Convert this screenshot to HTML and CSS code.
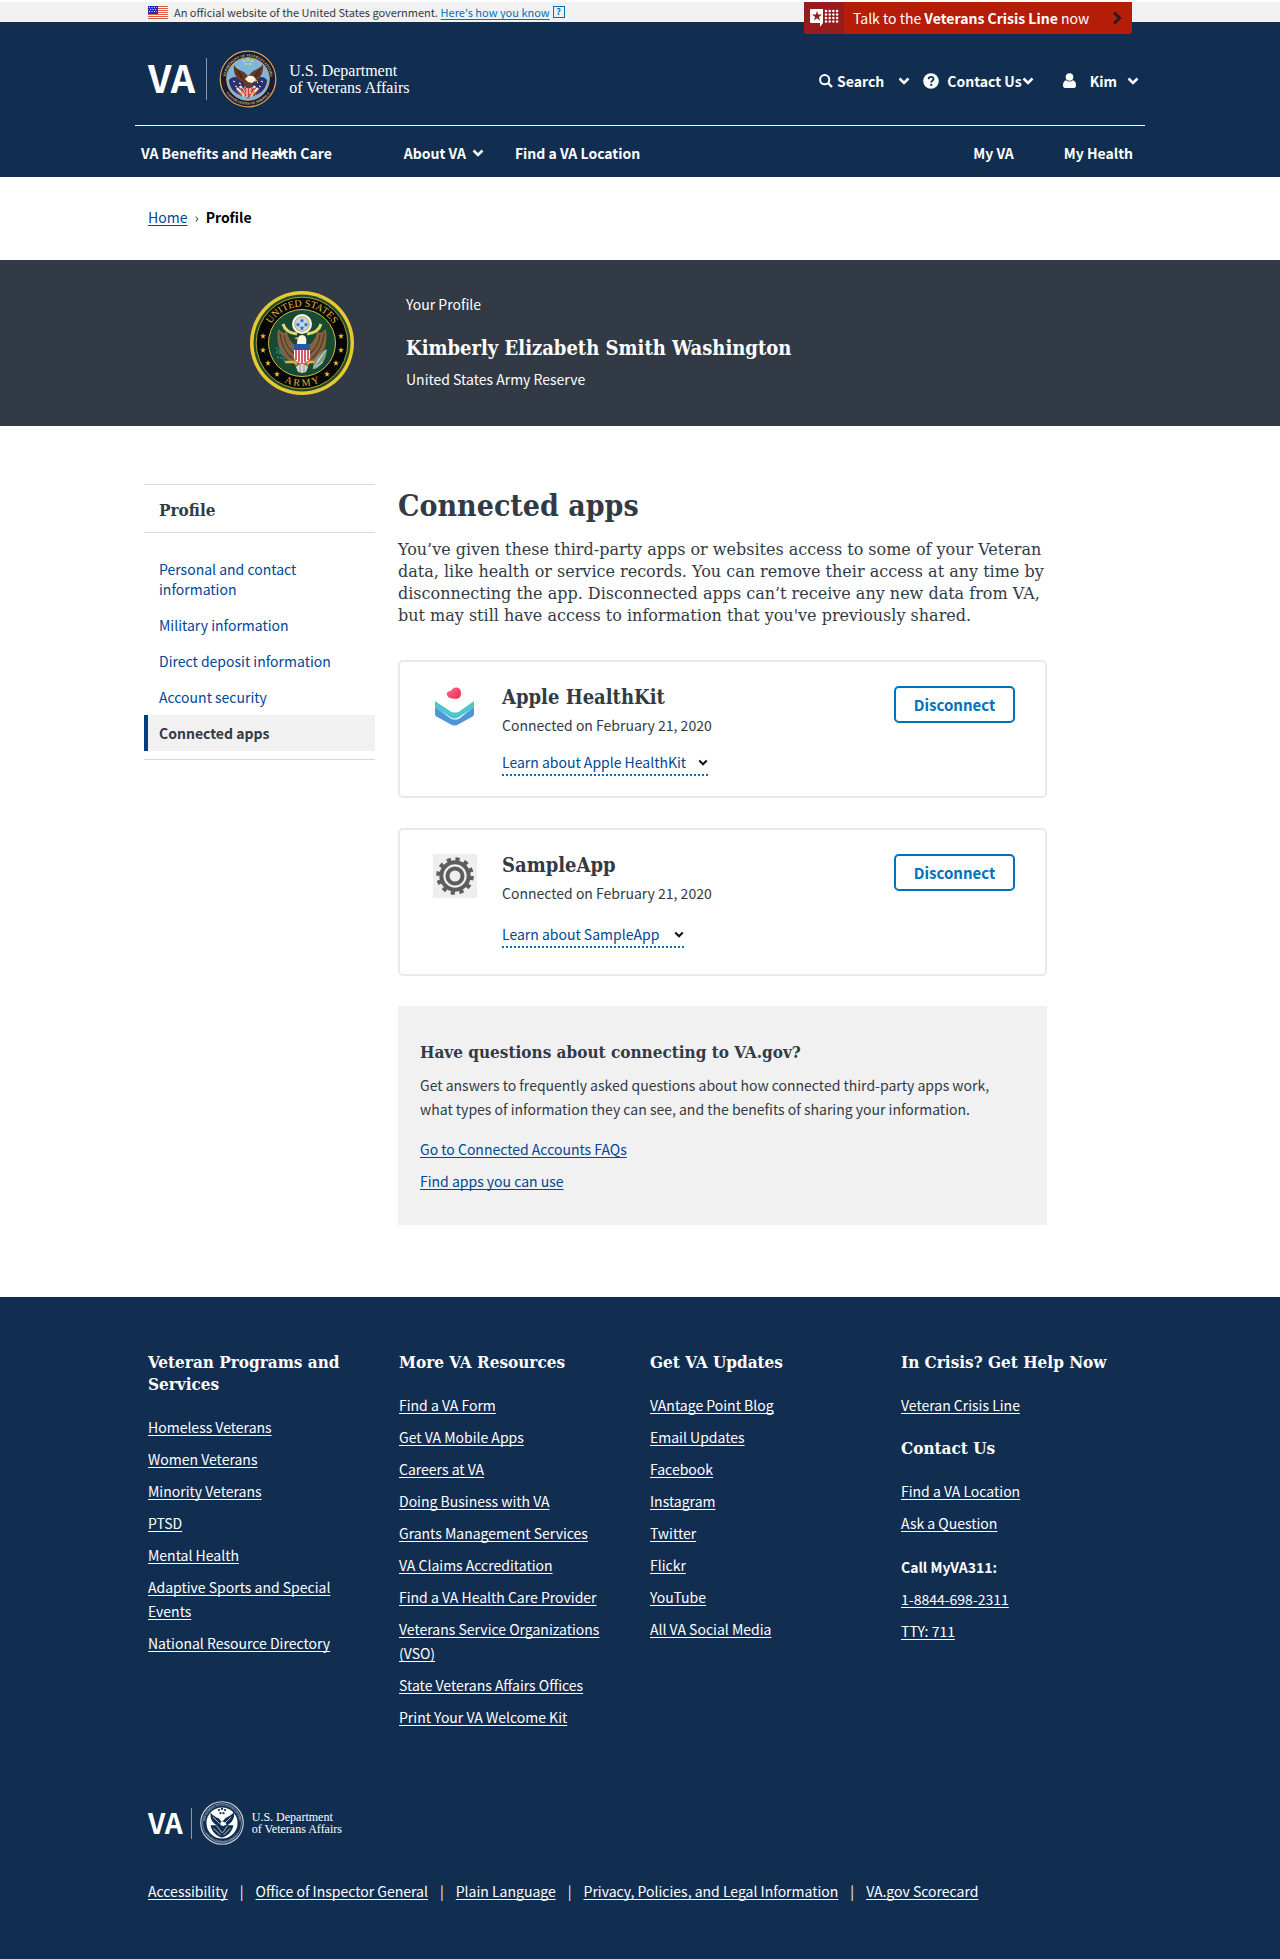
FILE: index.html
```html
<!DOCTYPE html>
<html lang="en">
<head>
<meta charset="utf-8">
<title>Connected apps | Veterans Affairs</title>
<meta name="viewport" content="width=device-width, initial-scale=1">
<link rel="stylesheet" href="styles.css">
</head>
<body>
<svg class="defs" aria-hidden="true">
  <defs>
    <symbol id="chevron" viewBox="0 0 12 8"><path d="M1.5 1.5 6 6l4.500-4.500" fill="none" stroke="currentColor" stroke-width="2.500"/></symbol>
    <symbol id="star" viewBox="0 0 10 10"><path d="M5 0 6.200 3.600H10L6.900 5.900 8.100 9.600 5 7.300 1.900 9.600 3.100 5.900 0 3.600h3.800z" fill="currentColor"/></symbol>
  </defs>
</svg>

<div class="banner">
  <div class="wrap banner-row">
    <svg class="flag" viewBox="0 0 20 13" aria-hidden="true">
      <rect width="20" height="13" fill="#fff"/>
      <path d="M0 .5h20M0 2.500h20M0 4.500h20M0 6.500h20M0 8.500h20M0 10.500h20M0 12.500h20" stroke="#db5b45"/>
      <rect width="10" height="8" fill="#2a2ab4"/>
      <path d="M1 1.500h8M2 3.500h7M1 5.500h8" stroke="#dfe3f8" stroke-dasharray="1 1.500"/>
    </svg>
    <span>An official website of the United States government. <a href="#">Here's how you know</a></span>
    <span class="help">?</span>
    <a class="crisis" href="#">
      <span class="crisis-icon">
        <svg viewBox="0 0 30 18" aria-hidden="true">
          <path d="M2 0h12v14l-3 4v-4H2a1 1 0 0 1-1-1V1a1 1 0 0 1 1-1z" fill="#fff"/>
          <use href="#star" x="3" y="2" width="10" height="10" color="#981b1e"/>
          <path d="M17 2h13M17 5.500h13M17 9h13M17 12.500h13" stroke="#fff" stroke-width="2.600" stroke-linecap="round" stroke-dasharray="0 3.700"/>
        </svg>
      </span>
      <span class="crisis-text">Talk to the <b>Veterans Crisis Line</b> now</span>
      <svg class="crisis-arrow" viewBox="0 0 10 14" aria-hidden="true"><path d="M2 1.500 7.500 7 2 12.500" fill="none" stroke="#2b1a1a" stroke-width="3"/></svg>
    </a>
  </div>
</div>

<header class="header">
  <div class="header-inner">
    <div class="header-top">
      <a class="logo" href="#">
        <span class="logo-va">VA</span>
        <svg class="logo-seal" viewBox="0 0 58 58" aria-hidden="true">
          <defs>
            <path id="seal-top" d="M7.860 36.700a22.500 22.500 0 1 1 42.280 0"/>
            <path id="seal-bottom" d="M3.300 29a25.700 25.700 0 0 0 51.400 0"/>
          </defs>
          <circle cx="29" cy="29" r="28.500" fill="#1b1a33"/>
          <circle cx="29" cy="29" r="27.800" fill="none" stroke="#d0a659" stroke-width="1.300"/>
          <circle cx="29" cy="29" r="21.300" fill="#7db7dc" stroke="#d0a659"/>
          <text class="seal-text"><textPath href="#seal-top" startOffset="50%" text-anchor="middle">DEPARTMENT OF VETERANS AFFAIRS</textPath></text>
          <text class="seal-text"><textPath href="#seal-bottom" startOffset="50%" text-anchor="middle">UNITED STATES OF AMERICA</textPath></text>
          <g fill="#f5e04c"><circle cx="25" cy="11" r="1"/><circle cx="29" cy="10" r="1"/><circle cx="33" cy="11" r="1"/><circle cx="27" cy="14" r="1"/><circle cx="31" cy="14" r="1"/></g>
          <path d="M10 30c4-5 10-4 17 4l-6 11C15 43 10 37 10 30zM48 30c-4-5-10-4-17 4l6 11c6-2 11-8 11-15z" fill="#2a3070"/>
          <path d="M14 31l2 1M16 36l2 1M20 33l2 1M42 31l2 1M40 36l2 1M38 32l1 1M19 40l1 1" stroke="#fff"/>
          <path d="M18 38l7 8M21 36l6 9M39 38l-7 8M36 36l-6 9" stroke="#e8e5e5" stroke-width="2.600"/>
          <path d="M17 40l6 6M22 38l5 8M40 40l-6 6M35 38l-5 8" stroke="#b5303a" stroke-width="1.600"/>
          <path d="M15 15c-1 8 2 14 9 17l3 6h5l3-6c6-3 10-9 9-18-2 4-7 5-11 8l-4 4-4-4c-4-2-8-3-10-7z" fill="#6b3a22"/>
          <path d="M16 18l7 9M19 20l5 8M43 17l-8 10M40 20l-6 8M17 23l7 6M42 23l-8 6" stroke="#3c1f14" stroke-width=".8"/>
          <path d="M29 26c4-1 7 0 8 4l-4 3-4-1-3-3z" fill="#f7f3e6"/>
          <path d="M36 29l3 2-3 1z" fill="#e3b22c"/>
          <path d="M25 38h8l-2 8-2 3-2-3z" fill="#d83a42"/><path d="M28 38v9M31 38v6" stroke="#fff"/>
          <path d="M22 42l4 2M36 42l-4 2" stroke="#dca23b" stroke-width="2"/>
        </svg>
        <span class="logo-name">U.S. Department<br>of Veterans Affairs</span>
      </a>
      <div class="actions">
        <button class="action action-search" type="button">
          <svg class="icon-search" viewBox="0 0 14 14" aria-hidden="true"><circle cx="5.700" cy="5.700" r="4.600" fill="none" stroke="currentColor" stroke-width="2"/><path d="m9 9 4 4" stroke="currentColor" stroke-width="2.400"/></svg>
          <span>Search</span>
          <svg class="chevron" aria-hidden="true"><use href="#chevron"/></svg>
        </button>
        <button class="action action-contact" type="button">
          <svg class="icon-help" viewBox="0 0 16 16" aria-hidden="true"><circle cx="8" cy="8" r="7.800" fill="currentColor"/><path d="M5.600 6.200C5.700 3 10.600 3.200 10.500 6c0 1.900-2.300 1.800-2.300 3.600" fill="none" stroke="#112e51" stroke-width="1.900"/><rect x="7.200" y="10.800" width="2" height="2" fill="#112e51"/></svg>
          <span>Contact Us</span>
          <svg class="chevron" aria-hidden="true"><use href="#chevron"/></svg>
        </button>
        <button class="action action-user" type="button">
          <svg class="icon-user" viewBox="0 0 13 15" aria-hidden="true"><circle cx="6.500" cy="4" r="3.800" fill="currentColor"/><path d="M3 7.200c2 1.700 5 1.700 7 0 2 .5 3 2.500 3 5.300 0 1.600-.8 2.500-2 2.500H2c-1.200 0-2-.9-2-2.500 0-2.800 1-4.800 3-5.300z" fill="currentColor"/></svg>
          <span>Kim</span>
          <svg class="chevron" aria-hidden="true"><use href="#chevron"/></svg>
        </button>
      </div>
    </div>
    <nav class="nav" aria-label="Main">
      <button class="nav-item nav-benefits" type="button">VA Benefits and Health Care<svg class="chevron" aria-hidden="true"><use href="#chevron"/></svg></button>
      <button class="nav-item nav-about" type="button">About VA<svg class="chevron" aria-hidden="true"><use href="#chevron"/></svg></button>
      <a class="nav-item" href="#">Find a VA Location</a>
      <a class="nav-item nav-my" href="#">My VA</a>
      <a class="nav-item" href="#">My Health</a>
    </nav>
  </div>
</header>

<nav class="wrap breadcrumb" aria-label="Breadcrumb">
  <a href="#">Home</a><span class="crumb-sep">›</span><b>Profile</b>
</nav>

<section class="profile">
  <div class="wrap profile-row">
    <svg class="army" viewBox="0 0 104 104" aria-hidden="true">
      <defs>
        <path id="army-top" d="M15.500 52a36.500 36.500 0 0 1 73 0"/>
        <path id="army-bottom" d="M9 52a43 43 0 0 0 86 0"/>
      </defs>
      <circle cx="52" cy="52" r="52" fill="#e9c930"/>
      <circle cx="52" cy="52" r="48.500" fill="#1d4d2b"/>
      <circle cx="52" cy="52" r="45.800" fill="#060606" stroke="#d8bb39" stroke-width=".8"/>
      <circle cx="52" cy="52" r="33.500" fill="#174a33" stroke="#d8bb39"/>
      <text class="army-text"><textPath href="#army-top" startOffset="50%" text-anchor="middle">UNITED STATES</textPath></text>
      <text class="army-text"><textPath href="#army-bottom" startOffset="50%" text-anchor="middle">A R M Y</textPath></text>
      <g color="#ecc236">
        <use href="#star" x="10" y="42" width="6" height="6"/><use href="#star" x="10" y="56" width="6" height="6"/><use href="#star" x="15" y="69" width="6" height="6"/><use href="#star" x="24" y="80" width="6" height="6"/>
        <use href="#star" x="88" y="42" width="6" height="6"/><use href="#star" x="88" y="56" width="6" height="6"/><use href="#star" x="83" y="69" width="6" height="6"/><use href="#star" x="74" y="80" width="6" height="6"/>
      </g>
      <path d="M33 33c2 7 7 9 14 10M71 33c-2 7-7 9-14 10" fill="none" stroke="#e3d66c" stroke-width="3"/>
      <path d="M28 38c-2 14 1 26 13 33l6-2V56c-6-4-9-10-10-15l-4 1zM76 38c2 14-1 26-13 33l-6-2V56c6-4 9-10 10-15l4 1z" fill="#866140"/>
      <path d="M30 42c1 11 5 20 13 26M34 44c1 9 5 15 11 19M74 42c-1 11-5 20-13 26M70 44c-1 9-5 15-11 19" fill="none" stroke="#4d3826" stroke-width="1.200"/>
      <path d="M45 66h14v9l-3 3h-8l-3-3z" fill="#866140"/>
      <circle cx="52" cy="33" r="10" fill="#f4f4ee"/>
      <circle cx="52" cy="33" r="7.300" fill="#c4d5ee" stroke="#cab559" stroke-width="1.200"/>
      <g color="#3566b5"><use href="#star" x="49.500" y="27" width="5" height="5"/><use href="#star" x="45.500" y="31" width="5" height="5"/><use href="#star" x="53.500" y="31" width="5" height="5"/><use href="#star" x="49.500" y="34.500" width="5" height="5"/></g>
      <path d="M47 53c0-6 2-9 5-9 4 0 5 4 4 9z" fill="#f7f7f0"/><path d="M48 46l-4 1 4 2z" fill="#e3b22c"/>
      <path d="M44 57h16v9c0 4-4 5-8 7-4-2-8-3-8-7z" fill="#fff"/>
      <path d="M46 58v11M49 58v13M52 58v15M55 58v13M58 58v11" stroke="#cf263a" stroke-width="1.500"/>
      <path d="M44 53h16v6H44z" fill="#2457a5"/>
      <path d="M35 71h9l3 2M69 71h-9l-3 2" fill="none" stroke="#e3b13c" stroke-width="2.500"/>
      <path d="M46 76c4-4 8-4 12 0l-2 5-4 1-4-1z" fill="#d5d5d5"/><path d="M50 74v7M54 74v7" stroke="#929797"/>
      <path d="M63 77c0-9 6-15 14-19-1 10-4 16-12 20z" fill="#82988b"/><path d="M63 78 76 59M66 76l7-5M67 71l5-7" stroke="#ccd5cd"/>
      <path d="M26 57c6 4 8 9 9 15M27 66l7 2M31 56v7M26 61l6 2" fill="none" stroke="#397b73" stroke-width="2" stroke-dasharray="2 1"/>
    </svg>
    <div class="profile-text">
      <p>Your Profile</p>
      <h2 class="profile-name">Kimberly Elizabeth Smith Washington</h2>
      <p>United States Army Reserve</p>
    </div>
  </div>
</section>

<div class="layout">
  <nav class="side" aria-label="Profile">
    <h2 class="side-title">Profile</h2>
    <ul class="side-list">
      <li><a href="#">Personal and contact information</a></li>
      <li><a href="#">Military information</a></li>
      <li><a href="#">Direct deposit information</a></li>
      <li><a href="#">Account security</a></li>
      <li><a class="current" href="#" aria-current="page">Connected apps</a></li>
    </ul>
  </nav>
  <main class="main">
    <h1>Connected apps</h1>
    <p class="intro">You’ve given these third-party apps or websites access to some of your Veteran data, like health or service records. You can remove their access at any time by disconnecting the app. Disconnected apps can’t receive any new data from VA, but may still have access to information that you've previously shared.</p>

    <section class="card">
      <svg class="app-icon" viewBox="0 0 44 44" aria-hidden="true">
        <defs><linearGradient id="heart" x1="0" y1="0" x2="1" y2="1"><stop offset="0" stop-color="#ff6aa8"/><stop offset="1" stop-color="#f02a3c"/></linearGradient></defs>
        <path d="M2 21 17 32c3 2 7 2 10 0l14-11v7c0 1-.4 1.700-1 2.200L26 38c-3 2-6 2-9 0L3 30.200c-.6-.5-1-1.200-1-2.200z" fill="#4f96d8"/>
        <path d="M2 15 17 25c3 2 7 2 10 0l14-10v5c0 1-.4 1.700-1 2.200L26 31c-3 2-6 2-9 0L3 22.200c-.6-.5-1-1.200-1-2.200z" fill="#4fc5cf"/>
        <path d="M14 9c-.8-2 .8-4 4-4 1-2.500 3.500-4 6-3.500 2.500.4 4 2.500 4 5.500 0 4-1.500 5.500-5 5.800-4 .3-8-.8-9-3.800z" fill="url(#heart)"/>
      </svg>
      <div class="card-text">
        <h2>Apple HealthKit</h2>
        <p>Connected on February 21, 2020</p>
        <button class="learn" type="button">Learn about Apple HealthKit<svg class="chevron-small" aria-hidden="true"><use href="#chevron"/></svg></button>
      </div>
      <button class="disconnect" type="button">Disconnect</button>
    </section>

    <section class="card card-roomy">
      <svg class="app-icon" viewBox="0 0 44 44" aria-hidden="true">
        <rect width="44" height="44" fill="#efeeef"/>
        <circle cx="22" cy="22" r="17" fill="none" stroke="#5d5d5d" stroke-width="3.600" stroke-dasharray="4.200 4.700"/>
        <circle cx="22" cy="22" r="13.700" fill="none" stroke="#5d5d5d" stroke-width="4"/>
        <circle cx="22" cy="22" r="7.500" fill="none" stroke="#5d5d5d" stroke-width="4"/>
      </svg>
      <div class="card-text">
        <h2>SampleApp</h2>
        <p>Connected on February 21, 2020</p>
        <button class="learn" type="button">Learn about SampleApp<svg class="chevron-small" aria-hidden="true"><use href="#chevron"/></svg></button>
      </div>
      <button class="disconnect" type="button">Disconnect</button>
    </section>

    <section class="faq">
      <h2>Have questions about connecting to VA.gov?</h2>
      <p>Get answers to frequently asked questions about how connected third-party apps work, what types of information they can see, and the benefits of sharing your information.</p>
      <ul class="links">
        <li><a href="#">Go to Connected Accounts FAQs</a></li>
        <li><a href="#">Find apps you can use</a></li>
      </ul>
    </section>
  </main>
</div>

<footer class="footer">
  <div class="wrap">
    <div class="footer-grid">
      <section>
        <h2>Veteran Programs and Services</h2>
        <ul class="links">
          <li><a href="#">Homeless Veterans</a></li>
          <li><a href="#">Women Veterans</a></li>
          <li><a href="#">Minority Veterans</a></li>
          <li><a href="#">PTSD</a></li>
          <li><a href="#">Mental Health</a></li>
          <li><a href="#">Adaptive Sports and Special Events</a></li>
          <li><a href="#">National Resource Directory</a></li>
        </ul>
      </section>
      <section>
        <h2>More VA Resources</h2>
        <ul class="links">
          <li><a href="#">Find a VA Form</a></li>
          <li><a href="#">Get VA Mobile Apps</a></li>
          <li><a href="#">Careers at VA</a></li>
          <li><a href="#">Doing Business with VA</a></li>
          <li><a href="#">Grants Management Services</a></li>
          <li><a href="#">VA Claims Accreditation</a></li>
          <li><a href="#">Find a VA Health Care Provider</a></li>
          <li><a href="#">Veterans Service Organizations (VSO)</a></li>
          <li><a href="#">State Veterans Affairs Offices</a></li>
          <li><a href="#">Print Your VA Welcome Kit</a></li>
        </ul>
      </section>
      <section>
        <h2>Get VA Updates</h2>
        <ul class="links">
          <li><a href="#">VAntage Point Blog</a></li>
          <li><a href="#">Email Updates</a></li>
          <li><a href="#">Facebook</a></li>
          <li><a href="#">Instagram</a></li>
          <li><a href="#">Twitter</a></li>
          <li><a href="#">Flickr</a></li>
          <li><a href="#">YouTube</a></li>
          <li><a href="#">All VA Social Media</a></li>
        </ul>
      </section>
      <section>
        <h2>In Crisis? Get Help Now</h2>
        <ul class="links">
          <li><a href="#">Veteran Crisis Line</a></li>
        </ul>
        <h2>Contact Us</h2>
        <ul class="links">
          <li><a href="#">Find a VA Location</a></li>
          <li><a href="#">Ask a Question</a></li>
        </ul>
        <ul class="links">
          <li><b>Call MyVA311:</b></li>
          <li><a href="#">1-8844-698-2311</a></li>
          <li><a href="#">TTY: 711</a></li>
        </ul>
      </section>
    </div>
    <a class="logo logo-small" href="#">
      <span class="logo-va">VA</span>
      <svg class="logo-seal" viewBox="0 0 58 58" aria-hidden="true">
        <circle cx="29" cy="29" r="28" fill="#112e51" stroke="#c8d1dc" stroke-width="1.500"/>
        <circle cx="29" cy="29" r="25.500" fill="#112e51" stroke="#8797ab"/>
        <text class="seal-text seal-text-light"><textPath href="#seal-top" startOffset="50%" text-anchor="middle">DEPARTMENT OF VETERANS AFFAIRS</textPath></text>
        <text class="seal-text seal-text-light"><textPath href="#seal-bottom" startOffset="50%" text-anchor="middle">UNITED STATES OF AMERICA</textPath></text>
        <circle cx="29" cy="29" r="20.500" fill="#fff"/>
        <path d="M14 15c-1 8 2 14 9 17l-9 0c1 8 8 15 15 16 7-1 14-8 15-16l-8 0c6-3 10-9 9-18-2 4-8 7-12 9l-4 5-4-5c-4-2-9-4-11-8z" fill="#112e51"/>
        <g fill="#112e51"><circle cx="25" cy="12" r="1.500"/><circle cx="29" cy="10.500" r="1.500"/><circle cx="33" cy="12" r="1.500"/><circle cx="27" cy="16" r="1.500"/><circle cx="31" cy="16" r="1.500"/></g>
        <path d="M17 21l9 9M41 21l-9 9M18 36l9 9M22 33l7 9M40 36l-9 9M36 33l-6 9" stroke="#c3ccd7" stroke-width="1.200"/>
        <path d="M27 28c4-2 7 0 8 3l-4 2-4-1z" fill="#fff"/>
      </svg>
      <span class="logo-name">U.S. Department<br>of Veterans Affairs</span>
    </a>
    <ul class="legal">
      <li><a href="#">Accessibility</a></li>
      <li><a href="#">Office of Inspector General</a></li>
      <li><a href="#">Plain Language</a></li>
      <li><a href="#">Privacy, Policies, and Legal Information</a></li>
      <li><a href="#">VA.gov Scorecard</a></li>
    </ul>
  </div>
</footer>
</body>
</html>
```
FILE: styles.css
```css
:root {
  --navy: #112e51;
  --ink: #323a45;
  --link: #004795;
  --blue: #0071bb;
  --gray: #f1f1f1;
  --sans: "Noto Sans CJK SC", "Noto Sans", sans-serif;
  --serif: "DejaVu Serif Condensed", "DejaVu Serif", serif;
}

* { box-sizing: border-box; }

body {
  margin: 0;
  background: #fff;
  color: var(--ink);
  font: 14px/24px var(--sans);
}

h1, h2, p, ul { margin: 0; padding: 0; }
ul { list-style: none; }
h1, h2 { font-family: var(--serif); font-weight: 700; }
button { border: 0; padding: 0; background: none; color: inherit; font: inherit; cursor: pointer; }
a {
  color: var(--link);
  text-decoration-thickness: 1px;
  text-underline-offset: 2px;
  text-decoration-skip-ink: none;
}

.defs { display: none; }
.wrap { max-width: 984px; margin: 0 auto; }
.chevron { width: 12px; height: 8px; flex: none; }

/* Government banner */
.banner { border-top: 2px solid #fff; background: var(--gray); font-size: 11px; line-height: 20px; }
.banner-row { position: relative; display: flex; align-items: center; }
.banner a { color: var(--blue); }
.flag { width: 20px; height: 13px; margin-right: 6px; }
.help {
  width: 12px;
  height: 12px;
  margin-left: 3px;
  border: 1px solid var(--blue);
  color: var(--blue);
  font-weight: 700;
  font-size: 9px;
  line-height: 10px;
  text-align: center;
}
.banner .crisis {
  position: absolute;
  top: 0;
  right: 0;
  display: flex;
  align-items: center;
  width: 328px;
  height: 32px;
  border-radius: 0 0 3px 3px;
  overflow: hidden;
  background: #b51d09;
  color: #fff;
  font-size: 14px;
  text-decoration: none;
}
.crisis-icon { display: flex; align-items: center; justify-content: center; width: 40px; height: 32px; background: #981b1e; }
.crisis-icon svg { width: 30px; height: 18px; }
.crisis-text { flex: 1; padding-left: 9px; }
.crisis-arrow { width: 10px; height: 14px; margin-right: 10px; }

/* Header */
.header { background: var(--navy); color: #fff; }
.header-inner { max-width: 1010px; margin: 0 auto; }
.header-top {
  display: flex;
  align-items: center;
  justify-content: space-between;
  padding: 28px 6px 17px 13px;
  border-bottom: 1px solid #fff;
}
.logo { display: flex; align-items: center; color: #fff; text-decoration: none; }
.logo-va {
  padding: 0 11px 4px 0;
  border-right: 1px solid #8a9ab0;
  font-weight: 700;
  font-size: 38px;
  line-height: 38px;
}
.logo-seal { width: 58px; height: 58px; margin: 0 12px; }
.logo-name { font: 16px/17px "Liberation Serif", serif; }
.seal-text { fill: #d9c69a; font: 700 3.5px "Liberation Serif", serif; }
.seal-text-light { fill: #b4c0ce; }

.actions { display: flex; align-items: center; padding-top: 3px; font-weight: 700; }
.action { display: flex; align-items: center; }
.icon-search { width: 14px; height: 14px; }
.icon-help { width: 16px; height: 16px; }
.icon-user { width: 13px; height: 15px; }
.action-search { gap: 4px; margin-right: 13px; }
.action-search .chevron { margin-left: 10px; }
.action-contact span { margin-left: 8px; }
.action-user { gap: 14px; margin-left: 29px; }
.action-user .chevron { margin-left: -4px; }

.nav { display: flex; padding: 15px 12px 12px 6px; font-weight: 700; }
.nav-item { color: #fff; text-decoration: none; }
.nav-benefits { position: relative; margin-right: 72px; }
.nav-benefits .chevron { position: absolute; top: 9px; right: 46px; }
.nav-about { display: flex; align-items: center; gap: 6px; margin-right: 31px; }
.nav-my { margin: 0 50px 0 auto; }

/* Breadcrumb and profile band */
.breadcrumb { display: flex; gap: 7px; padding-top: 28px; padding-bottom: 31px; }
.breadcrumb b { color: #000; }
.crumb-sep { color: var(--ink); }

.profile { background: var(--ink); color: #fff; }
.profile-row { display: flex; align-items: center; gap: 52px; padding: 31px 0 31px 102px; line-height: 20px; }
.profile-text { padding-bottom: 4px; }
.army { width: 104px; height: 104px; }
.army-text { fill: #ddba3c; font: 10px "Liberation Serif", serif; }
.profile-name { margin: 20px 0 7px; font-size: 20px; line-height: 28px; }

/* Page body */
.layout {
  display: grid;
  grid-template-columns: 231px minmax(0, 649px);
  gap: 23px;
  align-items: start;
  max-width: 992px;
  margin: 0 auto;
  padding: 58px 0 72px;
}
.side { border-bottom: 1px solid #d6d7d9; padding-bottom: 8px; }
.side-title {
  padding: 14px 15px 11px;
  border: solid #d6d7d9;
  border-width: 1px 0;
  font-size: 17px;
  line-height: 22px;
}
.side-list { margin-top: 18px; line-height: 20px; }
.side-list a { display: block; padding: 8px 30px 8px 11px; border-left: 4px solid transparent; text-decoration: none; }
.side-list .current { border-color: #003e83; background: var(--gray); color: var(--ink); font-weight: 700; }

.main { padding-top: 4px; }
h1 { font-size: 30px; line-height: 36px; }
.intro { margin: 15px 0 33px; font: 16px/22px "DejaVu Serif", serif; }

.card {
  display: flex;
  align-items: flex-start;
  margin-bottom: 30px;
  padding: 24px 30px 20px 33px;
  border: 2px solid #e9e9e9;
  border-radius: 5px;
  line-height: 20px;
}
.app-icon { width: 44px; height: 44px; margin-right: 25px; }
.card-text { flex: 1; }
.card h2 { margin-bottom: 7px; font-size: 20px; line-height: 22px; }
.learn {
  display: flex;
  align-items: center;
  margin-top: 17px;
  padding-bottom: 2px;
  border-bottom: 2px dotted var(--blue);
  color: var(--link);
}
.chevron-small { width: 10px; height: 7px; margin-left: 12px; color: #111; }
.card-roomy { padding-bottom: 26px; }
.card-roomy .learn { margin-top: 21px; }
.card-roomy .chevron-small { margin-left: 15px; }
.disconnect {
  width: 121px;
  height: 37px;
  border: 2px solid var(--blue);
  border-radius: 5px;
  color: var(--blue);
  font-weight: 700;
  font-size: 15px;
}

.faq { padding: 35px 22px 32px; background: var(--gray); }
.faq h2 { margin-bottom: 10px; font-size: 17px; line-height: 22px; }
.faq .links { margin-top: 16px; }
.links li + li { margin-top: 8px; }

/* Footer */
.footer { padding: 54px 0 56px; background: var(--navy); color: #fff; }
.footer a { color: #fff; }
.footer-grid { display: grid; grid-template-columns: repeat(4, 1fr); gap: 20px; }
.footer-grid section { padding-right: 8px; }
.footer h2 { margin-bottom: 20px; font-size: 17px; line-height: 22px; }
.links + h2, .links + .links { margin-top: 20px; }
.logo-small { margin: 72px 0 34px; }
.logo-small .logo-va { padding: 0 8px 3px 0; font-size: 28px; line-height: 28px; }
.logo-small .logo-seal { width: 44px; height: 44px; margin: 0 8px; }
.logo-small .logo-name { font-size: 12px; line-height: 12px; }
.legal { display: flex; flex-wrap: wrap; }
.legal li + li::before { content: "|"; margin: 0 12px; }
```
